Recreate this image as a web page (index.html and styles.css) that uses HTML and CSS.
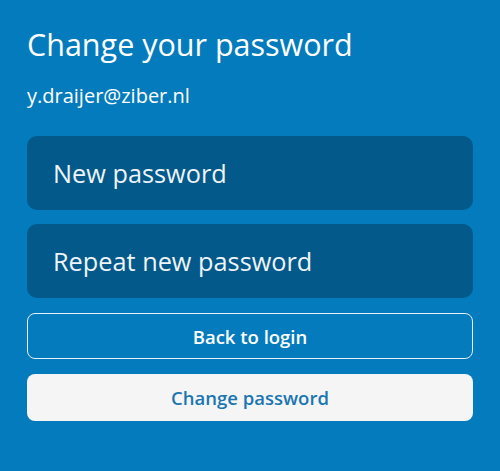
FILE: index.html
```html
<!DOCTYPE html>
<html lang="en">
<head>
<meta charset="UTF-8">
<meta name="viewport" content="width=device-width, initial-scale=1.0">
<title>Change your password</title>
<link rel="stylesheet" href="styles.css">
</head>
<body>

<div id="reset-container">
    <h1 class="title">Change your password</h1>
    <p class="account">y.draijer@ziber.nl</p>
    <form id="resetForm" class="reset-form">
        <input type="password" class="field" name="password" placeholder="New password" required>
        <input type="password" class="field" name="repeat" placeholder="Repeat new password" required>
        <button type="button" class="btn btn-outline">Back to login</button>
        <button type="submit" class="btn btn-solid">Change password</button>
    </form>
</div>

</body>
</html>
```

FILE: styles.css
```css
body {
    font-family: "Open Sans", Arial, sans-serif;
    background-color: #037bbc; /* Page blue */
    color: #ffffff;
    margin: 0;
    height: 100vh;
}
#reset-container {
    padding: 22px 27px;
}
.title {
    font-size: 30.5px;
    font-weight: 400;
    line-height: 44px;
    margin: 0;
}
.account {
    font-size: 20px;
    line-height: 26px;
    margin: 17px 0 27px;
}
.reset-form {
    display: flex;
    flex-direction: column;
}
.field {
    height: 74px;
    padding: 0 26px;
    margin-bottom: 14px;
    border: none;
    border-radius: 10px;
    background-color: #02598a;
    color: #ffffff;
    font-family: inherit;
    font-size: 25.3px;
    box-sizing: border-box;
}
.field::placeholder {
    color: #eef4f8;
    opacity: 1;
}
.btn {
    border-radius: 8px;
    font-family: inherit;
    font-size: 18.5px;
    font-weight: 600;
    cursor: pointer;
    box-sizing: border-box;
}
.btn-outline {
    height: 46px;
    margin: 1px 0 15px;
    background: transparent;
    color: #ffffff;
    border: 1px solid #e6f0f7;
}
.btn-solid {
    height: 47px;
    background-color: #f5f5f5;
    color: #1a75b1;
    border: none;
}
```
